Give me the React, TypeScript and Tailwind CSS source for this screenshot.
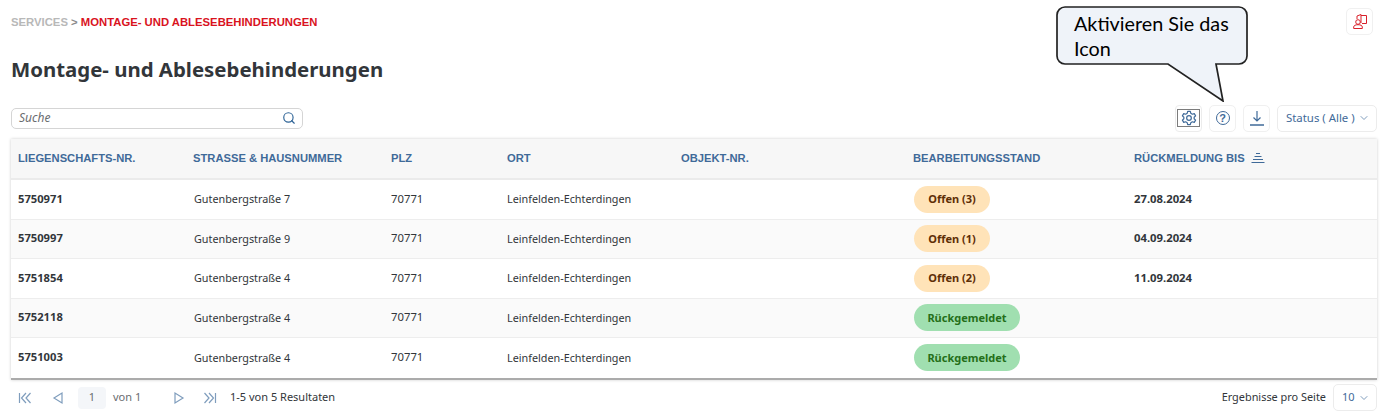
import { ChevronDown, Search } from 'lucide-react';

const rows = [
  { id: '5750971', street: 'Gutenbergstraße 7', status: 'Offen (3)', date: '27.08.2024' },
  { id: '5750997', street: 'Gutenbergstraße 9', status: 'Offen (1)', date: '04.09.2024' },
  { id: '5751854', street: 'Gutenbergstraße 4', status: 'Offen (2)', date: '11.09.2024' },
  { id: '5752118', street: 'Gutenbergstraße 4', status: 'Rückgemeldet', date: '' },
  { id: '5751003', street: 'Gutenbergstraße 4', status: 'Rückgemeldet', date: '' },
];

const gridCols = 'grid grid-cols-[175px_198px_116px_174px_232px_221px_1fr] pl-[7px]';

function GearIcon() {
  return (
    <svg width="16" height="16" viewBox="0 0 24 24" fill="none" stroke="#3f6a99" strokeWidth="1.8" strokeLinejoin="round">
      <path d="M10 2h4l.7 3 2.3 1.3 2.9-.9 2 3.4-2.2 2.1v2.2l2.2 2.1-2 3.4-2.9-.9-2.3 1.3-.7 3h-4l-.7-3L7 17.700l-2.900.9-2-3.400 2.200-2.100v-2.200L2.100 8.800l2-3.400 2.900.9L9.300 5z" />
      <circle cx="12" cy="12" r="3.500" />
    </svg>
  );
}

function SortIcon() {
  return (
    <svg width="14" height="10" viewBox="0 0 14 10" stroke="#3f6a99" strokeWidth="1">
      <path d="M5 .5h4M3.500 3.500h7M2 6.500h10M.5 9.500h13" />
    </svg>
  );
}

function DownloadIcon() {
  return (
    <svg width="14" height="16" viewBox="0 0 14 16" fill="none" stroke="#3f6a99" strokeWidth="1.200">
      <path d="M7 1v10M3.500 7.500 7 11l3.500-3.500" />
      <path d="M0 15h14" strokeWidth="1.500" />
    </svg>
  );
}

function PersonBooksIcon() {
  return (
    <svg width="16" height="16" viewBox="0 0 16 16" fill="none" stroke="#d9202a" strokeWidth="1">
      <path d="M5 5V2l4-1.500V9" />
      <path d="M9 1.500h5.500V9.500H10" />
      <circle cx="6" cy="8" r="2.300" />
      <path d="M1.700 14.500v-1.500c0-1.400 1.600-2.300 4.300-2.300s4.300.9 4.300 2.300v1.500z" />
    </svg>
  );
}

function Pager({ d }: { d: string }) {
  return (
    <svg width="14" height="14" viewBox="0 0 14 14" fill="none" stroke="#7f9dbd" strokeWidth="1.200">
      <path d={d} />
    </svg>
  );
}

export default function App() {
  return (
    <div className="relative h-[419px] w-[1386px] overflow-hidden bg-white font-['Liberation_Sans',sans-serif] text-[#32363a]">
      <div className="flex h-[44px] items-start justify-between pr-[13px] pl-[11px]">
        <div className="pt-[15px] text-[11.3px] leading-[14px] font-bold">
          <span className="text-[#b8b8b8]">SERVICES</span>
          <span className="text-[#8a8a8a]"> &gt; </span>
          <span className="text-[#d9131e]">MONTAGE- UND ABLESEBEHINDERUNGEN</span>
        </div>
        <button className="mt-[8px] flex h-[27px] w-[27px] items-center justify-center rounded-[5px] border border-[#f0f0f0] bg-white">
          <PersonBooksIcon />
        </button>
      </div>

      <h1 className="mt-[11px] pl-[11px] font-['Noto_Sans',sans-serif] text-[20.4px] leading-[28px] font-bold text-[#32363a]">
        Montage- und Ablesebehinderungen
      </h1>

      <div className="mt-[20px] flex h-[30px] items-center justify-between pr-[9px] pl-[11px]">
        <div className="flex h-[21px] w-[292px] items-center justify-between rounded-[5px] border border-[#d5d5d5] pr-[6px] pl-[7px]">
          <span className="font-['Noto_Sans',sans-serif] text-[12px] text-[#6a6d70] italic">Suche</span>
          <Search size={14} className="text-[#2f6497]" />
        </div>
        <div className="flex items-center gap-[7px]">
          <button className="flex h-[27px] w-[27px] items-center justify-center rounded-[4px] border border-[#ececec]">
            <span className="flex h-[18px] w-[23px] items-center justify-center border border-[#7c7c7c]">
              <GearIcon />
            </span>
          </button>
          <button className="flex h-[27px] w-[27px] items-center justify-center rounded-[5px] border border-[#f0f0f0]">
            <span className="flex h-[14px] w-[14px] items-center justify-center rounded-full border border-[#3f6a99] text-[11px] leading-none font-bold text-[#3f6a99]">?</span>
          </button>
          <button className="flex h-[27px] w-[27px] items-center justify-center rounded-[5px] border border-[#f0f0f0]">
            <DownloadIcon />
          </button>
          <button className="flex h-[27px] w-[100px] items-center justify-between rounded-[5px] border border-[#ececec] pr-[6px] pl-[8px] font-['Noto_Sans',sans-serif] text-[11.400px] text-[#3f6a99]">
            <span>Status ( Alle )</span>
            <ChevronDown size={12} className="text-[#7f9dbd]" />
          </button>
        </div>
      </div>

      <div className="mx-[11px] mt-[6px] w-[1366px] border-b-2 border-b-[#ababab] shadow-[0_0_3px_rgba(0,0,0,0.2)]">
        <div className={`${gridCols} h-[41px] items-center border-b-2 border-[#ebebeb] bg-[#f7f7f7] text-[11.200px] font-bold text-[#3f6a99]`}>
          <span>LIEGENSCHAFTS-NR.</span>
          <span>STRASSE &amp; HAUSNUMMER</span>
          <span>PLZ</span>
          <span>ORT</span>
          <span>OBJEKT-NR.</span>
          <span>BEARBEITUNGSSTAND</span>
          <span className="flex items-center gap-[6px]">
            RÜCKMELDUNG BIS <SortIcon />
          </span>
        </div>
        {rows.map((row, i) => (
          <div
            key={row.id}
            className={`${gridCols} h-[39.500px] items-center border-b border-[#ededed] font-['Noto_Sans',sans-serif] text-[11px] last:border-b-0 ${i % 2 === 1 ? 'bg-[#fafafa]' : 'bg-white'}`}
          >
            <span className="text-[11.200px] font-bold">{row.id}</span>
            <span className="pl-[1px] text-[10.800px]">{row.street}</span>
            <span className="text-[11.300px]">70771</span>
            <span className="text-[10.800px]">Leinfelden-Echterdingen</span>
            <span />
            <span>
              {row.date ? (
                <span className="ml-[1px] inline-flex h-[27px] w-[76px] items-center justify-center rounded-full bg-[#ffe3b8] font-bold text-[#5e2e06]">
                  {row.status}
                </span>
              ) : (
                <span className="ml-[1px] inline-flex h-[27px] w-[106px] items-center justify-center rounded-full bg-[#a0dfb0] font-bold text-[#256f1a]">
                  {row.status}
                </span>
              )}
            </span>
            <span className="text-[11.300px] font-bold">{row.date}</span>
          </div>
        ))}
      </div>

      <div className="flex h-[36px] items-center justify-between pr-[9px] pl-[18px] font-['Noto_Sans',sans-serif] text-[11px]">
        <div className="flex items-center">
          <Pager d="M1.500 2v10M8 2 3.500 7 8 12M12.500 2 8 7l4.500 5" />
          <span className="ml-[19px] flex"><Pager d="M11 2v10L3 7z" /></span>
          <span className="ml-[13px] flex h-[22px] w-[28px] items-center justify-center rounded-[4px] bg-[#f4f6f9] text-[#6a6d70]">1</span>
          <span className="ml-[7px] w-[59px] text-[#6a6d70]">von 1</span>
          <Pager d="M3 2v10l8-5z" />
          <span className="ml-[17px] flex"><Pager d="M1.500 2 6 7l-4.500 5M6 2l4.500 5L6 12M12.500 2v10" /></span>
          <span className="ml-[13px]">1-5 von 5 Resultaten</span>
        </div>
        <div className="flex items-center gap-[7px]">
          <span className="text-[10.900px]">Ergebnisse pro Seite</span>
          <button className="flex h-[27px] w-[44px] items-center justify-between rounded-[5px] border border-[#ececec] pr-[6px] pl-[8px] text-[#3f6a99]">
            <span>10</span>
            <ChevronDown size={12} className="text-[#7f9dbd]" />
          </button>
        </div>
      </div>

      {/* Annotation callout drawn over the screenshot */}
      <div className="absolute top-[6px] left-[1056px] h-[96px] w-[194px]">
        <svg width="194" height="96" viewBox="0 0 194 96" className="absolute inset-0">
          <path
            d="M9 1h174a8 8 0 0 1 8 8v41a8 8 0 0 1-8 8h-23l7 37-55-37H9a8 8 0 0 1-8-8V9a8 8 0 0 1 8-8z"
            fill="#eff3f9"
            stroke="#222222"
            strokeWidth="1.700"
          />
        </svg>
        <p className="absolute top-[5px] left-[18px] w-[172px] font-['Lato',sans-serif] text-[19.800px] leading-[25px] text-black">
          Aktivieren Sie das Icon
        </p>
      </div>
    </div>
  );
}
